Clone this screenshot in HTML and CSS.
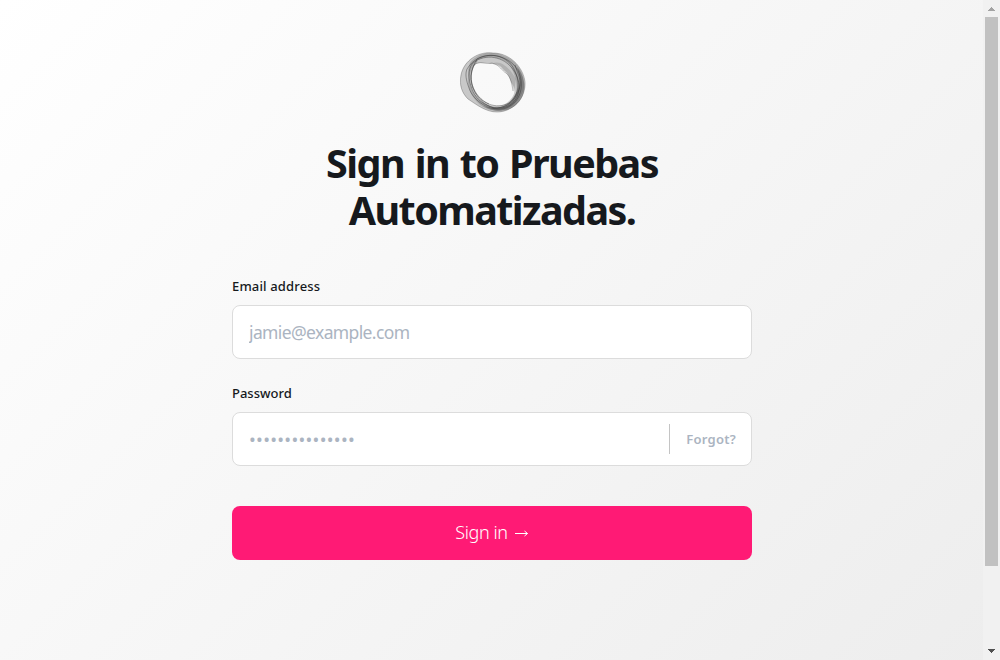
FILE: index.html
```
<!DOCTYPE html>
<html lang="en">
<head>
<meta charset="utf-8">
<title>Sign in</title>
<link rel="stylesheet" href="styles.css">
</head>
<body>
<div class="page">
<main class="content">
  <svg class="logo" width="66" height="62" viewBox="0 0 66 62" fill="none">
    <path fill-rule="evenodd" fill="#555" fill-opacity=".3" d="M1 24C4 9 19 0 33 2C49 2 63 15 65 31C66 48 52 61 37 61C26 61 17 54 8 48C2 42-1 34 1 24ZM13 15C6 27 10 43 23 51C34 58 47 56 53 45C56 40 54 35 51 31C48 22 47 22 43 18C38 11 33 15 28 12C22 12 17 11 13 15Z"/>
    <path fill-rule="evenodd" fill="#444" fill-opacity=".25" d="M10 12C18 1 34 0 44 5C57 9 66 24 64 37C60 53 46 63 31 59C18 56 7 42 8 27C8 21 8 16 10 12ZM15 11C7 23 9 38 20 49C30 59 46 58 53 49C60 39 56 23 49 13C38 4 24 4 15 11Z"/>
    <path fill="#333" fill-opacity=".35" d="M57 16C66 26 68 44 56 54C46 63 31 60 23 55C38 60 50 54 55 44C60 36 61 28 57 16Z"/>
    <path fill="#555" fill-opacity=".2" d="M33 12C42 9 50 18 56 28L54 41C52 34 51 25 43 19C39 15 37 13 33 12Z"/>
    <g stroke="#222" stroke-width=".7" stroke-opacity=".55">
      <path d="M12 13C22 3 41 4 51 16C62 28 62 46 50 54C37 62 18 54 12 38C8 28 8 19 12 13Z"/>
      <path d="M17 8C32 0 48 6 54 18C60 30 60 43 49 52C36 59 21 52 15 41C9 30 10 19 17 8Z"/>
      <path d="M7 18C18 0 41 1 54 14C67 29 62 51 46 57C31 62 13 50 9 37C6 29 5 23 7 18Z"/>
      <path d="M14 14C5 29 15 51 34 57M17 10C5 25 13 46 29 53"/>
      <path d="M14 14C20 9 25 14 32 12C40 14 42 20 46 22C51 26 52 34 53 40" stroke-width=".5"/>
      <path d="M55 14C58 25 64 31 57 43C52 54 43 57 34 57"/>
      <path d="M1 24C4 9 19 0 33 2C49 2 63 15 65 31C66 48 52 61 37 61C26 61 17 54 8 48C2 42-1 34 1 24Z" stroke-width=".5"/>
    </g>
  </svg>
  <h1 class="title">Sign in to Pruebas Automatizadas.</h1>
  <form class="form">
    <label class="label email-label" for="email">Email address</label>
    <div class="field"><input class="input" id="email" type="email" placeholder="jamie@example.com"></div>
    <label class="label password-label" for="password">Password</label>
    <div class="field">
      <input class="input dots" id="password" type="password" placeholder="•••••••••••••••">
      <a class="forgot">Forgot?</a>
    </div>
    <button class="submit" type="button"><span>Sign in</span>
      <svg width="14" height="10" viewBox="0 0 14 10" fill="none" stroke="#fff"><path d="M0 4.5H12.5M9.5 2L12.5 4.5L9.5 7"/></svg>
    </button>
  </form>
</main>
<div class="scrollbar">
  <svg class="arrow" width="17" height="17" shape-rendering="crispEdges"><path fill="#a3a3a3" d="M8 7h1v1h1v1h1v1h1v1H5v-1h1V9h1V8h1z"/></svg>
  <div class="thumb"></div>
  <svg class="arrow" width="17" height="17" shape-rendering="crispEdges"><path fill="#505050" d="M5 6h7v1h-1v1h-1v1H9v1H8V9H7V8H6V7H5z"/></svg>
</div>
</div>
</body>
</html>
```
FILE: styles.css
```
* { box-sizing: border-box; }
body { margin: 0; font-family: "Noto Sans", "Open Sans", sans-serif; color: #16191d; }
.page { display: flex; height: 660px; overflow: hidden; background: linear-gradient(135deg, #fff 0%, #ededed 100%); }
.content { flex: 1; padding: 51px 231px 0 232px; display: flex; flex-direction: column; align-items: center; }
.logo { display: block; margin-left: 1px; flex: none; }
.title { width: 400px; margin: 27px 0 0; font-size: 39.5px; line-height: 47px; font-weight: 700; text-align: center; letter-spacing: -1.58px; word-spacing: 2px; }
.form { width: 520px; margin-top: 42px; display: flex; flex-direction: column; }
.label { height: 29px; font-size: 13px; line-height: 20px; font-weight: 500; }
.email-label { letter-spacing: .15px; }
.password-label { letter-spacing: 0; }
.field { height: 54px; margin-bottom: 24px; background: #fff; border: 1px solid #dcdcdc; border-radius: 8px; display: flex; align-items: center; }
.input { flex: 1; min-width: 0; height: 50px; padding: 0 16px; border: 0; outline: 0; background: transparent; font: 400 17.5px "Noto Sans", sans-serif; letter-spacing: -.62px; }
.input::placeholder { color: #abb4c1; opacity: 1; }
.dots { font-size: 18px; letter-spacing: .3px; }
.forgot { height: 30px; padding: 0 15px 0 16px; border-left: 1px solid #c4c4c4; color: #abb4c1; font-size: 13px; letter-spacing: .25px; line-height: 30px; font-weight: 600; }
.submit { height: 54px; margin-top: 16px; padding: 0 0 2px; border: 0; border-radius: 8px; background: #ff1a75; color: #fff; font: 300 18px/52px "Noto Sans", sans-serif; letter-spacing: -.4px; display: flex; align-items: center; justify-content: center; gap: 7px; }
.submit svg { margin-top: 3px; }
.scrollbar { width: 17px; background: #f1f1f1; display: flex; flex-direction: column; align-items: center; }
.arrow { display: block; flex: none; }
.thumb { width: 13px; height: 549px; margin-bottom: 77px; background: #c1c1c1; }
```
